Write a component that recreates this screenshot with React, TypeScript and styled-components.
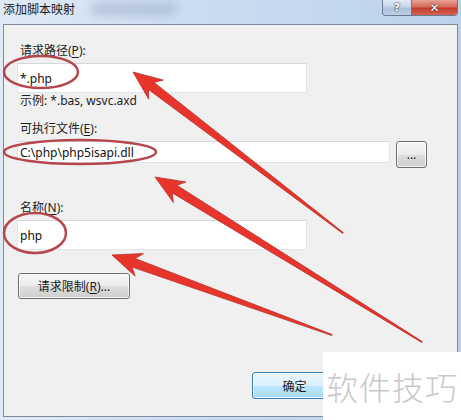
import React from "react";
import styled, { createGlobalStyle } from "styled-components";

const Global = createGlobalStyle`
  html, body { margin: 0; padding: 0; background: #c9dbef; }
  body { font-family: "Noto Sans", "Noto Sans CJK SC", sans-serif; }
`;

const FONT = `"Noto Sans", "Noto Sans CJK SC", sans-serif`;
const CJK = `"Noto Sans CJK SC", sans-serif`;

const Window = styled.div`
  position: relative;
  width: 461px;
  height: 420px;
  overflow: hidden;
  display: flex;
  flex-direction: column;
  background: linear-gradient(to right, #dfeaf6 0%, #cbdcf0 45%, #bcd2eb 100%);
  font-family: ${FONT};
`;

const TitleBar = styled.div`
  height: 24px;
  display: flex;
  align-items: flex-start;
  flex-shrink: 0;
`;

const Title = styled.div`
  margin: 2px 0 0 3px;
  font-size: 12px;
  line-height: 16px;
  color: #1c1c1c;
`;

const Blurred = styled.div`
  margin: 2px 0 0 16px;
  width: 86px;
  height: 14px;
  border-radius: 6px;
  background: rgba(110, 130, 160, 0.28);
  filter: blur(4px);
`;

const Controls = styled.div`
  margin-left: auto;
  margin-right: 3px;
  display: flex;
  height: 15px;
  border: 1px solid #6b7a8f;
  border-top: none;
  border-radius: 0 0 4px 4px;
  overflow: hidden;
`;

const CtlButton = styled.div<{ $close?: boolean; $w: number }>`
  width: ${(p) => p.$w}px;
  height: 15px;
  display: flex;
  align-items: center;
  justify-content: center;
  color: #fff;
  font-family: "DejaVu Sans", sans-serif;
  font-weight: bold;
  font-size: ${(p) => (p.$close ? 12 : 11)}px;
  text-shadow: 0 0 2px #333, 0 0 1px #333;
  background: ${(p) =>
    p.$close
      ? "linear-gradient(#e6a596 0%, #d66a5b 45%, #c43c2e 55%, #d46354 100%)"
      : "linear-gradient(#e2ebf6 0%, #c6d5e8 45%, #adc2dc 55%, #bccde3 100%)"};
  border-left: ${(p) => (p.$close ? "1px solid #6b7a8f" : "none")};
`;

const Panel = styled.div`
  flex: 1;
  margin: 0 3px 3px 3px;
  border: 1px solid #7f8b9a;
  background: #f0f0f0;
  padding: 18px 0 0 13px;
  display: flex;
  flex-direction: column;
  align-items: flex-start;
`;

const Label = styled.div<{ $mt?: number }>`
  margin-top: ${(p) => p.$mt ?? 0}px;
  padding-left: 3px;
  font-size: 12px;
  line-height: 16px;
  color: #1e1e1e;
`;

const U = styled.span`
  text-decoration: underline;
  text-underline-offset: 2px;
`;

const Input = styled.div<{ $w: number; $h: number; $mt?: number }>`
  margin-top: ${(p) => p.$mt ?? 0}px;
  box-sizing: border-box;
  width: ${(p) => p.$w}px;
  height: ${(p) => p.$h}px;
  background: #fff;
  border: 1px solid #e1e4e8;
  border-top-color: #d4d8dd;
  display: flex;
  align-items: center;
  padding-left: 2px;
  font-size: 12px;
  color: #111;
`;

const Row = styled.div<{ $mt?: number }>`
  margin-top: ${(p) => p.$mt ?? 0}px;
  display: flex;
  align-items: flex-start;
  gap: 6px;
`;

const Button = styled.div<{ $w: number; $h: number; $mt?: number; $ml?: number; $default?: boolean }>`
  margin-top: ${(p) => p.$mt ?? 0}px;
  margin-left: ${(p) => p.$ml ?? 0}px;
  box-sizing: border-box;
  width: ${(p) => p.$w}px;
  height: ${(p) => p.$h}px;
  border: 1px solid ${(p) => (p.$default ? "#3c7fb1" : "#707070")};
  border-radius: 3px;
  background: ${(p) =>
    p.$default
      ? "linear-gradient(#eaf6fd 0%, #d9f0fc 50%, #bee6fd 51%, #a7d9f5 100%)"
      : "linear-gradient(#f6f6f6 0%, #ebebeb 50%, #dddddd 51%, #cfcfcf 100%)"};
  box-shadow: inset 0 0 0 1px rgba(255, 255, 255, 0.7);
  display: flex;
  align-items: center;
  justify-content: center;
  font-size: 12px;
  color: #1a1a1a;
`;

const Footer = styled.div`
  margin-top: 73px;
  margin-left: 235px;
  display: flex;
`;

const Watermark = styled.div`
  position: absolute;
  left: 323px;
  top: 352px;
  width: 138px;
  height: 68px;
  background: #fff;
  display: flex;
  align-items: center;
  justify-content: center;
  font-size: 32px;
  font-weight: 300;
  color: #c8c8c8;
  letter-spacing: 1px;
  font-family: ${CJK};
`;

const Overlay = styled.svg`
  position: absolute;
  left: 0;
  top: 0;
  pointer-events: none;
`;

type P = [number, number];

function arrowPoints(tip: P, tail: P): string {
  const dx = tail[0] - tip[0];
  const dy = tail[1] - tip[1];
  const len = Math.hypot(dx, dy);
  const ux = dx / len;
  const uy = dy / len;
  const nx = -uy;
  const ny = ux;
  const headLen = 29;
  const headHalf = 12;
  const neckBack = 23;
  const neckHalf = 4.5;
  const tailHalf = 0.5;
  const at = (d: number, w: number): string =>
    `${(tip[0] + ux * d + nx * w).toFixed(1)},${(tip[1] + uy * d + ny * w).toFixed(1)}`;
  return [
    at(0, 0),
    at(headLen, headHalf),
    at(neckBack, neckHalf),
    at(len, tailHalf),
    at(len, -tailHalf),
    at(neckBack, -neckHalf),
    at(headLen, -headHalf),
  ].join(" ");
}

const arrows: [P, P][] = [
  [[133, 72], [343, 233]],
  [[155, 177], [422, 342]],
  [[112, 255], [332, 335]],
];

const ellipses = [
  { cx: 41, cy: 72, rx: 37, ry: 16 },
  { cx: 80, cy: 152, rx: 76, ry: 12 },
  { cx: 35, cy: 233, rx: 31, ry: 20 },
];

export default function App() {
  return (
    <>
      <Global />
      <Window>
        <TitleBar>
          <Title>添加脚本映射</Title>
          <Blurred />
          <Controls>
            <CtlButton $w={28}>?</CtlButton>
            <CtlButton $w={45} $close>
              ✕
            </CtlButton>
          </Controls>
        </TitleBar>
        <Panel>
          <Label>
            请求路径(<U>P</U>):
          </Label>
          <Input $w={290} $h={30} $mt={4}>
            *.php
          </Input>
          <Label>示例: *.bas, wsvc.axd</Label>
          <Label $mt={12}>
            可执行文件(<U>E</U>):
          </Label>
          <Row $mt={4}>
            <Input $w={373} $h={22}>
              C:\php\php5isapi.dll
            </Input>
            <Button $w={31} $h={27}>
              ...
            </Button>
          </Row>
          <Label $mt={32}>
            名称(<U>N</U>):
          </Label>
          <Input $w={290} $h={30} $mt={4}>
            php
          </Input>
          <Button $w={112} $h={26} $mt={23} $ml={1}>
            请求限制(<U>R</U>)...
          </Button>
          <Footer>
            <Button $w={85} $h={27} $default>
              确定
            </Button>
          </Footer>
        </Panel>
        <Overlay width={461} height={420} viewBox="0 0 461 420">
          {ellipses.map((e, i) => (
            <ellipse
              key={i}
              cx={e.cx}
              cy={e.cy}
              rx={e.rx}
              ry={e.ry}
              fill="none"
              stroke="#b5474c"
              strokeWidth={2.5}
            />
          ))}
          {arrows.map(([tip, tail], i) => (
            <polygon
              key={i}
              points={arrowPoints(tip, tail)}
              fill="#e8352c"
              stroke="#b9302a"
              strokeWidth={0.8}
              strokeLinejoin="round"
            />
          ))}
        </Overlay>
        <Watermark>软件技巧</Watermark>
      </Window>
    </>
  );
}
